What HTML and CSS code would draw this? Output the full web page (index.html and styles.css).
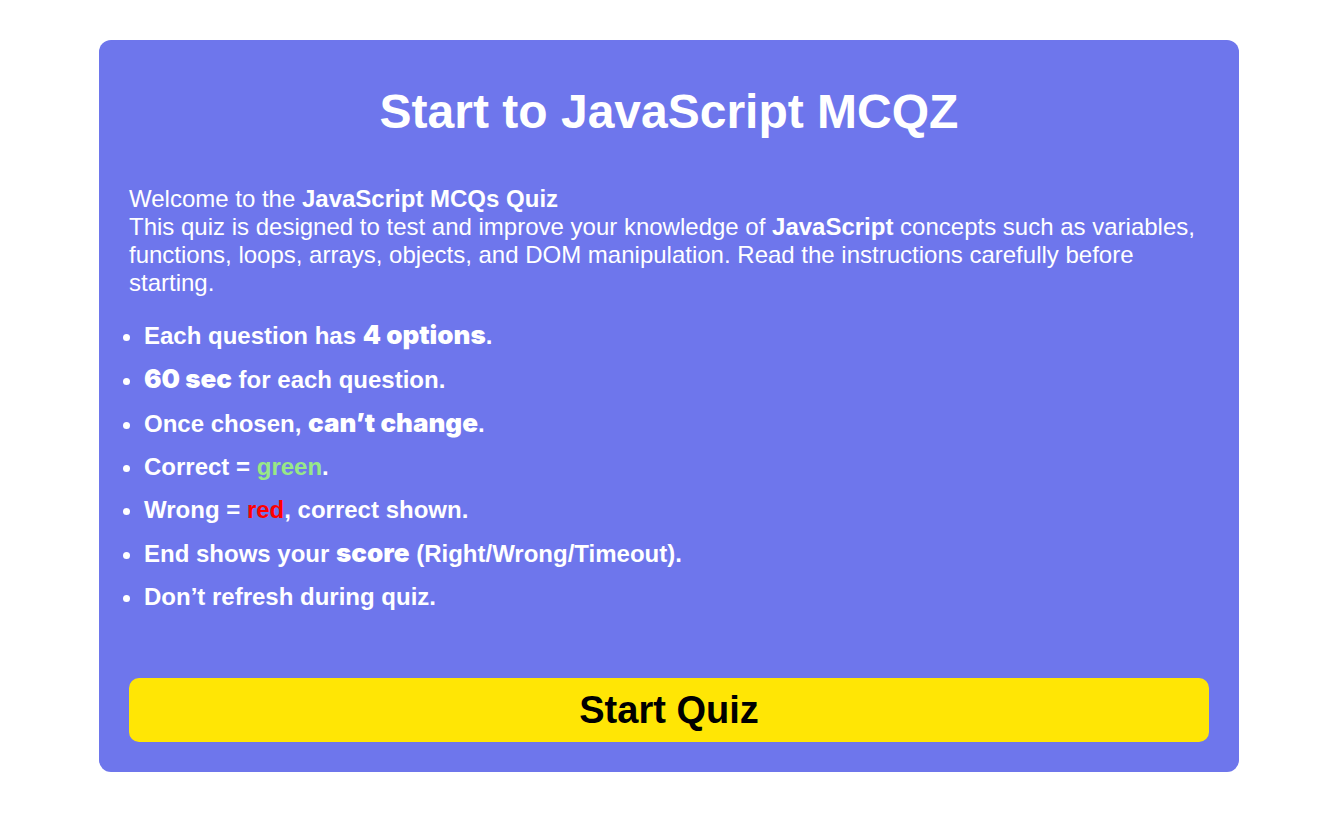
FILE: index.html
```html
<!DOCTYPE html>
<html lang="en">
<head>
<meta charset="utf-8">
<meta name="viewport" content="width=device-width, initial-scale=1">
<title>JavaScript MCQs Quiz</title>
<link rel="stylesheet" href="styles.css">
</head>
<body>
<main class="card">
  <h1 class="title">Start to JavaScript MCQZ</h1>
  <p class="intro">Welcome to the <b>JavaScript MCQs Quiz</b><br>This quiz is designed to test and improve your knowledge of <b>JavaScript</b> concepts such as variables, functions, loops, arrays, objects, and DOM manipulation. Read the instructions carefully before starting.</p>
  <ul class="rules">
    <li>Each question has <strong class="heavy">4 options</strong>.</li>
    <li><strong class="heavy">60 sec</strong> for each question.</li>
    <li>Once chosen, <strong class="heavy">can’t change</strong>.</li>
    <li>Correct = <span class="correct">green</span>.</li>
    <li>Wrong = <span class="wrong">red</span>, correct shown.</li>
    <li>End shows your <strong class="heavy">score</strong> (Right/Wrong/Timeout).</li>
    <li>Don’t refresh during quiz.</li>
  </ul>
  <button class="start" type="button">Start Quiz</button>
</main>
</body>
</html>
```
FILE: styles.css
```css
* {
  box-sizing: border-box;
  margin: 0;
  padding: 0;
}

body {
  padding: 40px 88px 40px 99px;
  background: #fff;
  font-family: Arial, "Liberation Sans", sans-serif;
}

.card {
  display: flex;
  flex-direction: column;
  padding: 42px 30px 30px;
  border-radius: 12px;
  background: #6e76ec;
  color: #fff;
}

.title {
  margin-bottom: 43px;
  font-size: 48px;
  line-height: 60px;
  text-align: center;
}

.intro {
  margin-bottom: 24px;
  font-size: 24px;
  line-height: 28px;
}

.rules {
  display: flex;
  flex-direction: column;
  gap: 16px;
  margin-bottom: 68px;
  padding-left: 15px;
  font-size: 24px;
  font-weight: 700;
  line-height: 27px;
}

.heavy {
  font-family: "Arial Black", Inter, sans-serif;
  font-size: 26px;
  font-weight: 900;
  line-height: 28px;
}

.correct {
  color: #98e886;
}

.wrong {
  color: #f00;
}

.start {
  padding: 10px;
  border: 0;
  border-radius: 10px;
  background: #ffe605;
  color: #000;
  font: 700 38px/44px Arial, "Liberation Sans", sans-serif;
  cursor: pointer;
}
```
